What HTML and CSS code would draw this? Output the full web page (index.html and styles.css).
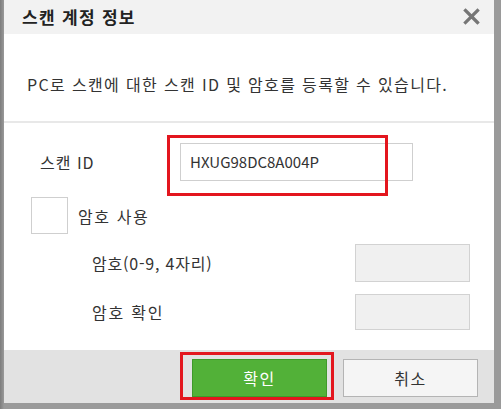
FILE: index.html
```html
<!DOCTYPE html>
<html lang="ko">
<head>
<meta charset="utf-8">
<title>스캔 계정 정보</title>
<link rel="stylesheet" href="styles.css">
</head>
<body>
<div class="dialog">
  <div class="header">
    <span class="title">스캔 계정 정보</span>
    <svg class="close" width="17" height="17" viewBox="0 0 17 17"><path d="M2.5 2.5 L14.5 14.5 M14.5 2.5 L2.5 14.5" stroke="#767676" stroke-width="3.2" stroke-linecap="square"/></svg>
  </div>
  <div class="desc">PC로 스캔에 대한 스캔 ID 및 암호를 등록할 수 있습니다.</div>
  <div class="form">
    <div class="row-id">
      <span class="label-id">스캔 ID</span>
      <div class="input-id">HXUG98DC8A004P</div>
    </div>
    <div class="row-check">
      <div class="checkbox"></div>
      <span class="label-check">암호 사용</span>
    </div>
    <div class="row-pw first">
      <span class="label-pw">암호(0-9, 4자리)</span>
      <div class="input-pw"></div>
    </div>
    <div class="row-pw second">
      <span class="label-pw wide">암호 확인</span>
      <div class="input-pw short"></div>
    </div>
  </div>
  <div class="footer">
    <div class="btn ok">확인</div>
    <div class="btn cancel">취소</div>
  </div>
  <div class="mark mark-id"></div>
  <div class="mark mark-ok"></div>
</div>
</body>
</html>
```
FILE: styles.css
```css
html, body {
  margin: 0;
  padding: 0;
}
body {
  width: 501px;
  height: 409px;
  overflow: hidden;
  background: linear-gradient(to right, #7d7d7d 0, #9a9a9a 4px, #9a9a9a 100%);
  font-family: "Noto Sans CJK KR", "Noto Sans", sans-serif;
  color: #333;
}
.dialog {
  position: relative;
  margin-left: 4px;
  width: 490px;
  height: 403px;
  background: #fff;
  display: flex;
  flex-direction: column;
}
.header {
  height: 34px;
  background: #f2f2f2;
  display: flex;
  align-items: center;
  justify-content: space-between;
  padding: 0 14px 0 18px;
}
.title {
  font-size: 17px;
  font-weight: 700;
  letter-spacing: 1.3px;
  color: #222;
  line-height: 20px;
}
.close {
  display: block;
  margin-top: -1px;
}
.desc {
  height: 89px;
  box-sizing: border-box;
  padding: 40px 0 0 23px;
  font-size: 16px;
  letter-spacing: 1.35px;
  line-height: 20px;
  color: #333;
  border-bottom: 2px solid #e8e8e8;
}
.form {
  flex: 1;
  display: flex;
  flex-direction: column;
}
.row-id {
  margin-top: 20px;
  display: flex;
  align-items: center;
  height: 38px;
}
.label-id {
  margin-left: 36px;
  width: 140px;
  font-size: 16px;
  letter-spacing: 1px;
  line-height: 20px;
}
.input-id {
  width: 233px;
  height: 38px;
  box-sizing: border-box;
  border: 1px solid #cfcfcf;
  padding-left: 9px;
  font-size: 15px;
  line-height: 36px;
  color: #333;
}
.row-check {
  margin-top: 16px;
  display: flex;
  align-items: center;
  height: 37px;
}
.checkbox {
  margin-left: 27px;
  width: 37px;
  height: 37px;
  box-sizing: border-box;
  border: 1px solid #cfcfcf;
  background: #fff;
}
.label-check {
  margin-left: 10px;
  font-size: 16px;
  letter-spacing: 1.6px;
  line-height: 20px;
}
.row-pw {
  display: flex;
  align-items: center;
  height: 38px;
}
.row-pw.first { margin-top: 10px; }
.row-pw.second { margin-top: 12px; height: 36px; }
.label-pw {
  margin-left: 88px;
  width: 263px;
  font-size: 16px;
  letter-spacing: 0.8px;
  line-height: 20px;
}
.label-pw.wide {
  letter-spacing: 1.8px;
}
.input-pw {
  width: 115px;
  height: 38px;
  box-sizing: border-box;
  border: 1px solid #d2d2d2;
  background: #f0f0f0;
}
.input-pw.short { height: 36px; }
.footer {
  height: 53px;
  background: #e2e2e2;
  display: flex;
  align-items: center;
  justify-content: flex-end;
  gap: 16px;
  padding-right: 16px;
  box-sizing: border-box;
}
.btn {
  width: 135px;
  height: 38px;
  box-sizing: border-box;
  display: flex;
  align-items: center;
  justify-content: center;
  font-size: 16px;
  letter-spacing: 1.5px;
  line-height: 20px;
  margin-top: 3px;
}
.btn.ok {
  background: #52b138;
  border: 1px solid #3f9a2a;
  color: #fff;
}
.btn.cancel {
  background: #f5f5f5;
  border: 1px solid #b4b4b4;
  color: #333;
}
.mark {
  position: absolute;
  border: 3px solid #e3161e;
  box-sizing: border-box;
}
.mark-id {
  left: 163px;
  top: 135px;
  width: 221px;
  height: 61px;
}
.mark-ok {
  left: 176px;
  top: 352px;
  width: 154px;
  height: 48px;
}
```
